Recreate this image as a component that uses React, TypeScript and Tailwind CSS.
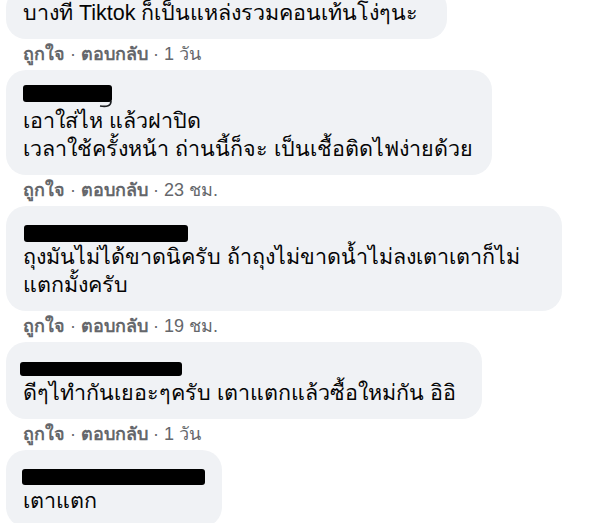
import React from "react";

type Comment = {
  name?: { w: number; h: number; top: number; left: number; tail?: boolean };
  lines: string[];
  width: string;
  time?: string;
};

const comments: Comment[] = [
  { lines: ["บางที Tiktok ก็เป็นแหล่งรวมคอนเท้นโง่ๆนะ"], width: "w-[441px]", time: "1 วัน" },
  {
    name: { w: 89, h: 17, top: 4, left: 0, tail: true },
    lines: ["เอาใส่ไห แล้วฝาปิด", "เวลาใช้ครั้งหน้า ถ่านนี้ก็จะ เป็นเชื้อติดไฟง่ายด้วย"],
    width: "w-[486px]",
    time: "23 ชม.",
  },
  {
    name: { w: 164, h: 17, top: 8, left: 1 },
    lines: ["ถุงมันไม่ได้ขาดนิครับ ถ้าถุงไม่ขาดน้ำไม่ลงเตาเตาก็ไม่", "แตกมั้งครับ"],
    width: "w-[556px]",
    time: "19 ชม.",
  },
  {
    name: { w: 162, h: 14, top: 9, left: -3 },
    lines: ["ดีๆไทำกันเยอะๆครับ เตาแตกแล้วซื้อใหม่กัน อิอิ"],
    width: "w-[476px]",
    time: "1 วัน",
  },
  {
    name: { w: 186, h: 16, top: 8, left: -1 },
    lines: ["เตาแตก"],
    width: "w-[216px]",
  },
];

function Bubble({ c, first }: { c: Comment; first: boolean }) {
  return (
    <div
      className={`rounded-[20px] bg-[#f0f2f5] px-[17px] pb-[12px] pt-[11px] text-[21.5px] text-[#050505] ${c.width} ${
        first ? "-mt-[12px]" : ""
      }`}
    >
      {c.name ? (
        <div className="relative flex h-[26px] items-start">
          <div
            className="rounded-[3px] bg-black"
            style={{ width: c.name.w, height: c.name.h, marginTop: c.name.top, marginLeft: c.name.left }}
          />
          {c.name.tail ? (
            <svg className="absolute left-[74px] top-[20px]" width="16" height="7" viewBox="0 0 16 7">
              <path d="M14 0 C14 5 10 6 3 5" fill="none" stroke="#1c1e21" strokeWidth="1.6" />
            </svg>
          ) : null}
        </div>
      ) : null}
      {c.lines.map((l, i) => (
        <div key={i} className="h-[28px] whitespace-nowrap leading-[28px]">
          {l}
        </div>
      ))}
    </div>
  );
}

function Meta({ time }: { time: string }) {
  return (
    <div className="h-[31px] px-[17px] pt-[5px] text-[18px] leading-[20px] text-[#65676b]">
      <span className="font-bold">ถูกใจ</span>
      <span> · </span>
      <span className="font-bold">ตอบกลับ</span>
      <span> · {time}</span>
    </div>
  );
}

export default function App() {
  return (
    <div className="h-[523px] w-[613px] overflow-hidden bg-white pl-[6px] font-['Liberation_Sans',sans-serif]">
      {comments.map((c, i) => (
        <div key={i} className="flex flex-col items-start">
          <Bubble c={c} first={i === 0} />
          {c.time ? <Meta time={c.time} /> : null}
        </div>
      ))}
    </div>
  );
}
